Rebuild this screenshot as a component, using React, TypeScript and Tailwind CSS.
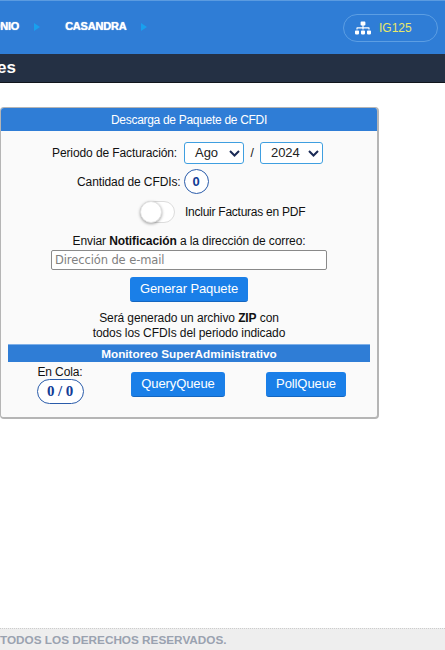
import { FaSitemap } from 'react-icons/fa';

const sans = "font-['Liberation_Sans',Arial,sans-serif]";

function NavItem({ label }: { label: string }) {
  return (
    <div className="flex items-center shrink-0">
      <span className="text-[11px] font-bold tracking-[-0.2px] text-white [text-shadow:0_0_1px_#fff]">{label}</span>
      <span className="ml-[15px] w-0 h-0 border-y-[4px] border-y-transparent border-l-[6px] border-l-[#18a0ee]" />
    </div>
  );
}

function BlueButton({ label, className }: { label: string; className: string }) {
  return (
    <button
      type="button"
      className={`h-[25px] rounded-[3px] border-b border-[#1466c0] bg-[#1a7fe8] text-[13px] text-white ${className}`}
    >
      {label}
    </button>
  );
}

function SelectBox({ label, className }: { label: string; className: string }) {
  return (
    <div
      className={`flex h-[22px] items-center justify-between rounded-[3px] border border-[#3f9fe0] bg-white text-[13px] text-[#222] ${className}`}
    >
      <span>{label}</span>
      <svg width="11" height="7" viewBox="0 0 11 7" className="mt-[1px]">
        <path d="M1 1l4.5 4.5L10 1" fill="none" stroke="#1a2a55" strokeWidth="2" />
      </svg>
    </div>
  );
}

export default function App() {
  return (
    <div className={`${sans} flex h-[650px] w-[445px] flex-col overflow-hidden bg-white text-[#111]`}>
      <header className="flex h-[54px] shrink-0 items-center justify-between border-t border-[#5b9be0] bg-[#2f7dd6] pr-[7px]">
        <nav className="flex items-center gap-[25px] overflow-hidden pb-[2px]">
          <div className="-ml-[30px]">
            <NavItem label="ANTONIO" />
          </div>
          <NavItem label="CASANDRA" />
        </nav>
        <div className="flex h-[28px] w-[95px] items-center gap-[8px] rounded-full border border-[#5c9ee3] pl-[11px]">
          <FaSitemap className="text-[16px] text-white" />
          <span className="text-[12px] text-[#e8e86a]">IG125</span>
        </div>
      </header>

      <div className="flex h-[29px] shrink-0 items-center overflow-hidden border-b border-[#11151c] bg-[#243044]">
        <h1 className="-ml-[3px] text-[17px] font-bold text-white">es</h1>
      </div>

      <main className="flex-1 pt-[24px]">
        <section className="h-[312px] w-[379px] overflow-hidden rounded-[4px] border border-b-2 border-r-2 border-[#b5b5b5] bg-[#fafafa]">
          <div className="flex h-[23px] items-center justify-center bg-[#2f7dd6] text-[12px] tracking-[-0.3px] text-white">
            Descarga de Paquete de CFDI
          </div>

          <div className="flex flex-col items-center text-[12px] tracking-[-0.1px]">
            <div className="ml-[51px] mt-[11px] flex items-center self-start">
              <span>Periodo de Facturación:</span>
              <SelectBox label="Ago" className="ml-[7px] w-[60px] pl-[10px] pr-[3px]" />
              <span className="w-[16px] text-center text-[12px]">/</span>
              <SelectBox label="2024" className="w-[63px] pl-[10px] pr-[3px]" />
            </div>

            <div className="ml-[76px] mt-[5px] flex items-center self-start">
              <span>Cantidad de CFDIs:</span>
              <span className="ml-[3px] flex h-[25px] w-[25px] items-center justify-center rounded-full border border-[#2a5caa] bg-white text-[13px] font-bold text-[#123c96]">
                0
              </span>
            </div>

            <div className="ml-[139px] mt-[7px] flex items-center self-start">
              <span className="relative h-[22px] w-[35px] rounded-full border border-[#dcdcdc] bg-white">
                <span className="absolute -left-[1px] -top-[1px] h-[22px] w-[22px] rounded-full border border-[#e2e2e2] bg-white shadow-[0_1px_3px_rgba(0,0,0,0.35)]" />
              </span>
              <span className="ml-[10px] tracking-[-0.25px]">Incluir Facturas en PDF</span>
            </div>

            <p className="mt-[10px] h-[17px] leading-[17px]">
              Enviar <b>Notificación</b> a la dirección de correo:
            </p>
            <input
              placeholder="Dirección de e-mail"
              className="h-[20px] w-[276px] rounded-[2px] border border-[#8a8a8a] bg-white px-[3px] font-['DejaVu_Sans',sans-serif] text-[11.5px] outline-none placeholder:text-[#808080]"
            />

            <BlueButton label="Generar Paquete" className="mt-[7px] w-[118px]" />

            <p className="mt-[9px] text-center leading-[15px]">
              Será generado un archivo <b>ZIP</b> con
              <br />
              todos los CFDIs del periodo indicado
            </p>
          </div>

          <div className="mx-[7px] mt-[3px] flex h-[18px] items-center justify-center border-t border-[#7fb0e8] bg-[#2f7dd6] text-[11.75px] font-bold text-white">
            Monitoreo SuperAdministrativo
          </div>

          <div className="flex items-start pt-[2px] text-[12px] tracking-[-0.1px]">
            <div className="ml-[35px] flex w-[48px] shrink-0 flex-col items-center">
              <span className="whitespace-nowrap leading-[16px]">En Cola:</span>
              <span className="-mt-[1px] flex h-[25px] w-[47px] items-center justify-center rounded-full border border-[#2a5caa] bg-white font-['Liberation_Serif',serif] text-[15px] font-bold text-[#123c96]">
                0 / 0
              </span>
            </div>
            <BlueButton label="QueryQueue" className="ml-[47px] mt-[8px] w-[94px]" />
            <BlueButton label="PollQueue" className="ml-[41px] mt-[8px] w-[80px]" />
          </div>
        </section>
      </main>

      <footer className="flex h-[22px] shrink-0 items-center border-t border-dotted border-[#ccc] bg-[#eeeeee] text-[11.75px] font-bold text-[#9aa2b0]">
        TODOS LOS DERECHOS RESERVADOS.
      </footer>
    </div>
  );
}
